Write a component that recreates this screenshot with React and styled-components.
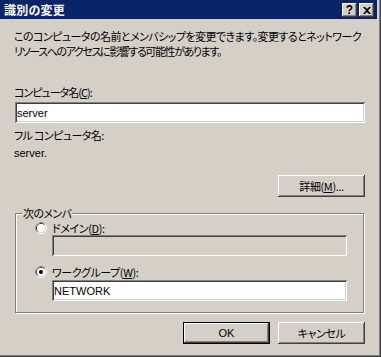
import styled, { createGlobalStyle } from "styled-components";

const JP = `"Noto Sans CJK JP", sans-serif`;
const LATIN = `"Liberation Sans", "Noto Sans CJK JP", sans-serif`;

const GlobalStyle = createGlobalStyle`
  html, body {
    margin: 0;
    padding: 0;
    background: #d4d0c8;
  }
  body {
    font-family: ${JP};
    font-size: 11px;
    color: #000;
  }
`;

const raised = `
  box-shadow: inset -1px -1px 0 #404040, inset 1px 1px 0 #fff,
    inset -2px -2px 0 #808080, inset 2px 2px 0 #d4d0c8;
`;

const sunken = `
  box-shadow: inset 1px 1px 0 #808080, inset -1px -1px 0 #fff,
    inset 2px 2px 0 #404040, inset -2px -2px 0 #d4d0c8;
`;

const Window = styled.div`
  width: 381px;
  height: 357px;
  box-sizing: border-box;
  padding: 0 4px 4px 0;
  background: #d4d0c8;
  box-shadow: inset -1px -1px 0 #404040, inset -2px -2px 0 #808080;
  display: flex;
  flex-direction: column;
  font-family: ${JP};
  font-size: 11px;
  font-feature-settings: "palt";
`;

const TitleBar = styled.div`
  height: 19px;
  box-sizing: border-box;
  background: #0a246a;
  display: flex;
  align-items: flex-start;
  padding: 3px 3px 0 4px;
`;

const Title = styled.div`
  flex: 1;
  color: #fff;
  font-weight: bold;
  font-size: 12px;
  line-height: 14px;
  letter-spacing: 0.2px;
`;

const CapButton = styled.div`
  width: 15px;
  height: 14px;
  background: #d4d0c8;
  ${raised}
  display: flex;
  align-items: center;
  justify-content: center;
  margin-left: ${(p) => (p.$gap ? "2px" : "0")};
  font-family: ${LATIN};
  font-weight: bold;
  font-size: 12px;
  line-height: 14px;
`;

const Body = styled.div`
  flex: 1;
  display: flex;
  flex-direction: column;
  padding: 10px 12px 0 14px;
`;

const Desc = styled.div`
  line-height: 15px;
  white-space: nowrap;
  letter-spacing: ${(p) => p.$ls || "0px"};
`;

const Label = styled.div`
  line-height: 15px;
  white-space: nowrap;
  margin-top: ${(p) => p.$top || 0}px;
  font-family: ${(p) => (p.$latin ? LATIN : JP)};
  letter-spacing: ${(p) => p.$ls || (p.$latin ? "0px" : "-0.4px")};
`;

const TextBox = styled.input`
  display: block;
  box-sizing: border-box;
  width: ${(p) => p.$w}px;
  height: 21px;
  margin: ${(p) => p.$top || 0}px 0 0 ${(p) => p.$left || 0}px;
  padding: 0 2px;
  border: none;
  outline: none;
  background: ${(p) => (p.disabled ? "#d4d0c8" : "#fff")};
  ${sunken}
  font-family: ${LATIN};
  font-size: 11px;
  color: #000;
`;

const PushButton = styled.div`
  width: 87px;
  height: 22px;
  box-sizing: border-box;
  background: #d4d0c8;
  display: flex;
  align-items: center;
  justify-content: center;
  ${(p) =>
    p.$default
      ? `border: 1px solid #000;
         box-shadow: inset -1px -1px 0 #404040, inset 1px 1px 0 #fff, inset -2px -2px 0 #808080;`
      : raised}
  font-family: ${(p) => (p.$latin ? LATIN : JP)};
  font-size: 11px;
  line-height: 14px;
  letter-spacing: ${(p) => (p.$latin ? "0" : "-0.4px")};
`;

const RightRow = styled.div`
  display: flex;
  justify-content: flex-end;
  gap: 8px;
  margin-top: ${(p) => p.$top}px;
`;

const GroupBox = styled.div`
  position: relative;
  margin: 16px 0 0 1px;
  width: 349px;
  box-sizing: border-box;
  border: 1px solid #808080;
  box-shadow: inset 1px 1px 0 #fff, 1px 1px 0 #fff;
  padding: 0 16px 11px 19px;
`;

const Legend = styled.span`
  position: absolute;
  top: -8px;
  left: 6px;
  padding: 0 1px;
  background: #d4d0c8;
  line-height: 15px;
  white-space: nowrap;
  letter-spacing: -0.6px;
`;

const RadioRow = styled.div`
  display: flex;
  align-items: center;
  gap: 5px;
  height: 14px;
  margin-top: ${(p) => p.$top}px;
  white-space: nowrap;
  line-height: 14px;
  letter-spacing: -0.4px;
`;

function Radio({ checked }) {
  return (
    <svg width="12" height="12" viewBox="0 0 12 12">
      <circle cx="6" cy="6" r="5.5" fill="none" stroke="#fff" />
      <path d="M2.11 9.89 A5.5 5.5 0 0 1 9.89 2.11" fill="none" stroke="#808080" />
      <circle cx="6" cy="6" r="4.5" fill="none" stroke="#d4d0c8" />
      <path d="M2.82 9.18 A4.5 4.5 0 0 1 9.18 2.82" fill="none" stroke="#404040" />
      <circle cx="6" cy="6" r="4" fill="#fff" />
      {checked && <circle cx="6" cy="6" r="2" fill="#000" />}
    </svg>
  );
}

function CloseGlyph() {
  return (
    <svg width="8" height="7" viewBox="0 0 8 7">
      <path d="M0 0h2l2 2 2-2h2L5 3.5 8 7H6L4 5 2 7H0l3-3.5z" fill="#000" />
    </svg>
  );
}

export default function App() {
  return (
    <>
      <GlobalStyle />
      <Window>
        <TitleBar>
          <Title>識別の変更</Title>
          <CapButton>?</CapButton>
          <CapButton $gap>
            <CloseGlyph />
          </CapButton>
        </TitleBar>
        <Body>
          <Desc $ls="-0.55px">
            このコンピュータの名前とメンバシップを変更できます。変更するとネットワーク
          </Desc>
          <Desc $ls="-1.4px">リソースへのアクセスに影響する可能性があります。</Desc>

          <Label $top={26} $ls="-1px">
            コンピュータ名(<u>C</u>):
          </Label>
          <TextBox $w={350} $left={1} $top={2} defaultValue="server" readOnly />

          <Label $top={5} $ls="-0.6px">
            フル コンピュータ名:
          </Label>
          <Label $top={3} $latin>
            server.
          </Label>

          <RightRow $top={14}>
            <PushButton>
              詳細(<u>M</u>)...
            </PushButton>
          </RightRow>

          <GroupBox>
            <Legend>次のメンバ</Legend>
            <RadioRow $top={7}>
              <Radio />
              <span>
                ドメイン(<u>D</u>):
              </span>
            </RadioRow>
            <TextBox $w={295} $left={17} disabled defaultValue="" />
            <RadioRow $top={9}>
              <Radio checked />
              <span>
                ワークグループ(<u>W</u>):
              </span>
            </RadioRow>
            <TextBox $w={295} $left={17} $top={1} defaultValue="NETWORK" readOnly />
          </GroupBox>

          <RightRow $top={9}>
            <PushButton $default $latin>
              OK
            </PushButton>
            <PushButton>キャンセル</PushButton>
          </RightRow>
        </Body>
      </Window>
    </>
  );
}
